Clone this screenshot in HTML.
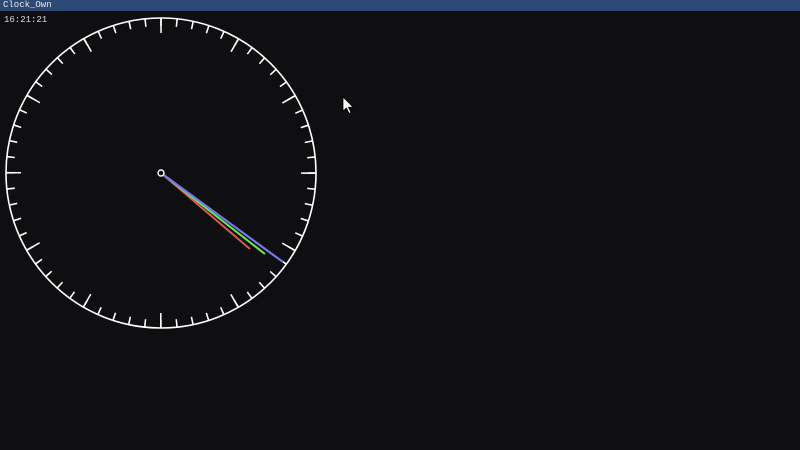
<!DOCTYPE html>
<html><head><meta charset="utf-8"><style>
html,body{margin:0;padding:0;width:800px;height:450px;overflow:hidden;background:#0f0f11;}
.tb{position:absolute;left:0;top:0;width:800px;height:11px;background:#2c4a75;color:#e8e8e8;font:9px "Liberation Mono",monospace;line-height:11px;padding-left:3px;box-sizing:border-box;}
.t{position:absolute;left:4px;top:15px;color:#ddd;font:9px "Liberation Mono",monospace;}
svg{position:absolute;left:0;top:0;}
</style></head><body>
<div class="tb">Clock_Own</div>
<div class="t">16:21:21</div>
<svg width="800" height="450">
<g transform="translate(161,173)" stroke="#fff" stroke-width="1.6" fill="none">
<circle r="155"/>
<circle r="151" stroke-width="8" stroke-dasharray="1.6 14.21" transform="rotate(-90.3)"/>
<circle r="147.5" stroke-width="15" stroke-dasharray="1.6 75.63" transform="rotate(-90.3)"/>
<line x1="0" y1="0" x2="89" y2="76" stroke="#e05555" stroke-width="2"/>
<line x1="0" y1="0" x2="104" y2="81" stroke="#66ee55" stroke-width="2"/>
<line x1="0" y1="0" x2="122" y2="89" stroke="#7777ee" stroke-width="2.2"/>
<circle r="3" fill="#0f0f11" stroke="#fff" stroke-width="1.4"/>
</g>
<path d="M343,97 L343,111 L346.5,108 L349,113.5 L351,112.5 L348.5,107.2 L353,107 Z" fill="#fff" stroke="#000" stroke-width="0.8"/>
</svg>
</body></html>
